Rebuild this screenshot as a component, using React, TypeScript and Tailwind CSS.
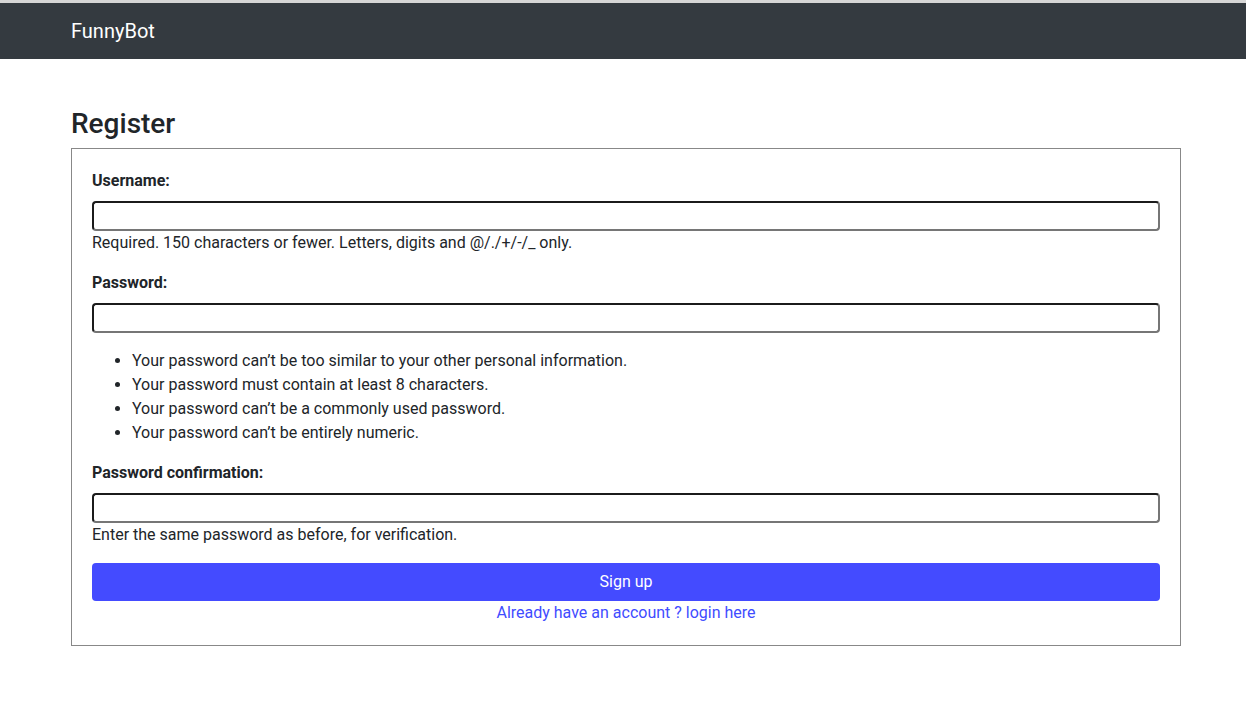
import React from "react";

function Field({ label, help, children }: { label: string; help?: string; children?: React.ReactNode }) {
  return (
    <div className="mb-4">
      <label className="block font-bold leading-6 mb-2">{label}</label>
      <input
        type="text"
        className="block w-full h-[30px] rounded-[4px] border-2 border-t-[#1b1b1b] border-l-[#1b1b1b] border-b-[#767676] border-r-[#767676] bg-white outline-none"
      />
      {help && <div className="leading-6">{help}</div>}
      {children}
    </div>
  );
}

export default function App() {
  return (
    <div className="min-h-screen bg-white text-[#212529] text-base" style={{ fontFamily: "Roboto, 'Liberation Sans', sans-serif" }}>
      <div className="h-[3px] bg-[#d6d6d6]" />
      <nav className="h-[56px] bg-[#343a40] flex items-center">
        <div className="w-[1110px] ml-[71px] text-white text-[20px] leading-[30px]">FunnyBot</div>
      </nav>
      <main className="w-[1110px] ml-[71px] pt-[48px]">
        <h2 className="text-[28px] leading-[34px] font-medium mb-[7px]">Register</h2>
        <div className="border border-[#888888] px-5 pt-5 pb-[20px]">
          <Field label="Username:" help="Required. 150 characters or fewer. Letters, digits and @/./+/-/_ only." />
          <Field label="Password:">
            <ul className="list-disc pl-10 mt-4 leading-6">
              <li>Your password can’t be too similar to your other personal information.</li>
              <li>Your password must contain at least 8 characters.</li>
              <li>Your password can’t be a commonly used password.</li>
              <li>Your password can’t be entirely numeric.</li>
            </ul>
          </Field>
          <Field label="Password confirmation:" help="Enter the same password as before, for verification." />
          <button className="block w-full h-[38px] rounded-[4px] bg-[#444bff] text-white leading-6">Sign up</button>
          <div className="text-center leading-6">
            <a className="text-[#3f4cff]" href="#">Already have an account ? login here</a>
          </div>
        </div>
      </main>
    </div>
  );
}
